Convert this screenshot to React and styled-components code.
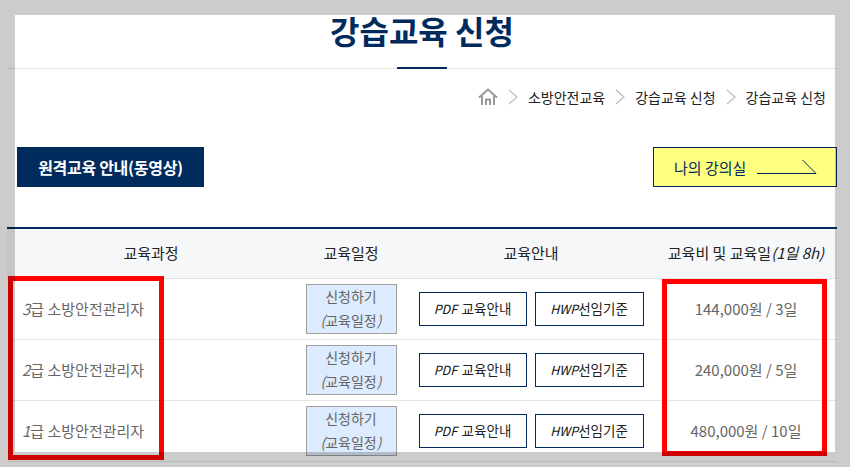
import React from "react";
import styled, { createGlobalStyle } from "styled-components";

const Global = createGlobalStyle`
  html, body { margin: 0; padding: 0; background: #fff; }
  body { font-family: "Noto Sans CJK KR", "Noto Sans", sans-serif; overflow: hidden; }
  * { box-sizing: border-box; }
`;

const Shot = styled.div`
  position: relative;
  width: 850px;
  height: 467px;
  overflow: hidden;
  padding: 0 13px 0 7px;
`;

const Frame = styled.div`
  position: absolute;
  inset: 0;
  border: solid rgba(0, 0, 0, 0.2);
  border-width: 15px;
  pointer-events: none;
`;

const Highlight = styled.div`
  position: absolute;
  top: ${(p) => p.$top}px;
  left: ${(p) => p.$left}px;
  width: ${(p) => p.$width}px;
  height: ${(p) => p.$height}px;
  border: 5px solid #ff0000;
`;

const TitleBar = styled.header`
  position: relative;
  height: 69px;
  border-bottom: 1px solid #e4e4e4;
  text-align: center;
  &::after {
    content: "";
    position: absolute;
    left: 390px;
    bottom: -1px;
    width: 50px;
    height: 2px;
    background: #002b5c;
  }
`;

const Title = styled.h1`
  margin: 0;
  padding-top: 8px;
  font-size: 32px;
  line-height: 44px;
  font-weight: 700;
  color: #002b5c;
`;

const Crumbs = styled.nav`
  display: flex;
  justify-content: flex-end;
  align-items: center;
  height: 20px;
  margin-top: 18px;
  padding-right: 11px;
  font-size: 14px;
  color: #222;
`;

const Chevron = styled.svg`
  width: 10px;
  height: 16px;
  margin: 0 10px;
`;

const Actions = styled.div`
  display: flex;
  justify-content: space-between;
  margin-top: 40px;
  padding-left: 10px;
`;

const VideoButton = styled.div`
  width: 187px;
  height: 40px;
  padding-bottom: 1px;
  background: #002b5c;
  color: #fff;
  font-size: 16px;
  font-weight: 700;
  letter-spacing: -0.3px;
  display: flex;
  align-items: center;
  justify-content: center;
`;

const RoomButton = styled.div`
  width: 184px;
  height: 40px;
  background: #ffff80;
  border: 1px solid #002b5c;
  color: #002b5c;
  font-size: 15px;
  display: flex;
  align-items: center;
  padding: 0 0 0 20px;
  gap: 11px;
`;

const Table = styled.div`
  margin-top: 40px;
  border-top: 2px solid #002b5c;
`;

const Row = styled.div`
  display: grid;
  grid-template-columns: 288px 112px 248px 182px;
  height: ${(p) => (p.$head ? 50 : 61)}px;
  align-items: center;
  border-bottom: 1px solid #e5e5e5;
  background: ${(p) => (p.$head ? "#f5f7f9" : "#fff")};
`;

const HeadCell = styled.div`
  padding-bottom: 2px;
  text-align: center;
  font-size: 15px;
  color: #222;
  white-space: nowrap;
`;

const Course = styled.div`
  padding: 0 0 2px 15px;
  font-size: 15px;
  color: #666;
`;

const ScheduleButton = styled.div`
  justify-self: center;
  width: 91px;
  height: 50px;
  background: #dcebfd;
  border: 1px solid #a0a0a0;
  color: #666;
  font-size: 14px;
  line-height: 23.5px;
  text-align: center;
`;

const Docs = styled.div`
  display: flex;
  justify-content: center;
  gap: 8px;
`;

const DocButton = styled.div`
  width: ${(p) => p.$w}px;
  height: 34px;
  padding-bottom: 2px;
  border: 1px solid #002b5c;
  font-size: 13.5px;
  word-spacing: 1.5px;
  color: #222;
  display: flex;
  align-items: center;
  justify-content: center;
  white-space: pre;
`;

const DocType = styled.em`
  font-size: 12.5px;
  color: #111;
`;

const Fee = styled.div`
  padding-bottom: 2px;
  text-align: center;
  font-size: 15px;
  color: #666;
`;

const courses = [
  { n: "3", fee: "144,000원 / 3일" },
  { n: "2", fee: "240,000원 / 5일" },
  { n: "1", fee: "480,000원 / 10일" },
];

const Arrow = () => (
  <svg width="62" height="16" viewBox="0 0 62 16" fill="none">
    <path d="M0 14.5H59L45.5 1" stroke="#002b5c" strokeWidth="1" />
  </svg>
);

const Home = () => (
  <svg width="20" height="18" viewBox="0 0 20 18" fill="none" stroke="#999" strokeWidth="2">
    <path d="M1 9.5L10 1.5L19 9.5" />
    <path d="M4 8V17M16 8V17" />
    <path d="M8 17V11.5H12V17" />
  </svg>
);

const Sep = () => (
  <Chevron viewBox="0 0 10 16" fill="none">
    <path d="M1 1L9 8L1 15" stroke="#bdbdbd" strokeWidth="1.2" />
  </Chevron>
);

export default function App() {
  return (
    <>
      <Global />
      <Shot>
        <TitleBar>
          <Title>강습교육 신청</Title>
        </TitleBar>
        <Crumbs>
          <Home />
          <Sep />
          <span>소방안전교육</span>
          <Sep />
          <span>강습교육 신청</span>
          <Sep />
          <span>강습교육 신청</span>
        </Crumbs>
        <Actions>
          <VideoButton>원격교육 안내(동영상)</VideoButton>
          <RoomButton>
            <span>나의 강의실</span>
            <Arrow />
          </RoomButton>
        </Actions>
        <Table>
          <Row $head>
            <HeadCell>교육과정</HeadCell>
            <HeadCell>교육일정</HeadCell>
            <HeadCell>교육안내</HeadCell>
            <HeadCell>
              교육비 및 교육일<em>(1일 8h)</em>
            </HeadCell>
          </Row>
          {courses.map((c) => (
            <Row key={c.n}>
              <Course>
                <em>{c.n}</em>급 소방안전관리자
              </Course>
              <ScheduleButton>
                신청하기
                <br />
                <em>(</em>교육일정<em>)</em>
              </ScheduleButton>
              <Docs>
                <DocButton $w={108}>
                  <DocType>PDF</DocType> 교육안내
                </DocButton>
                <DocButton $w={109}>
                  <DocType>HWP</DocType>선임기준
                </DocButton>
              </Docs>
              <Fee>{c.fee}</Fee>
            </Row>
          ))}
        </Table>
        <Highlight $top={276} $left={8} $width={156} $height={184} />
        <Highlight $top={279} $left={662} $width={165} $height={177} />
        <Frame />
      </Shot>
    </>
  );
}
